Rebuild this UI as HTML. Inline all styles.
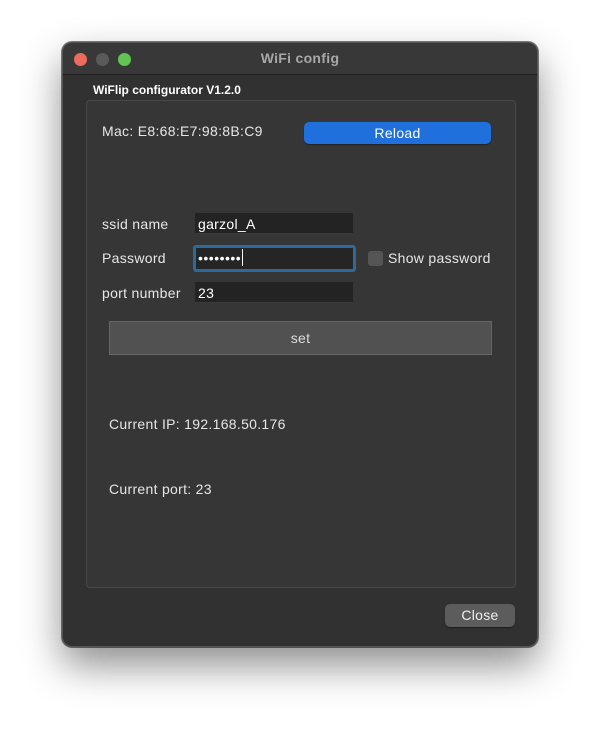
<!DOCTYPE html>
<html><head><style>
body{margin:0;width:600px;height:730px;background:#fff;position:relative;overflow:hidden;font-family:"Liberation Sans",sans-serif;font-size:14px;letter-spacing:0.3px;color:#e6e6e6}
.win{position:absolute;left:62px;top:42px;width:476px;height:605px;background:#313131;border-radius:10px;border:1px solid #555;box-sizing:border-box;box-shadow:0 18px 40px rgba(0,0,0,.45),0 0 0 1px rgba(0,0,0,.5)}
.tb{position:absolute;left:0;top:0;width:100%;height:31px;background:#383838;border-bottom:1px solid #1e1e1e;border-radius:10px 10px 0 0}
.dot{position:absolute;top:10px;width:13px;height:13px;border-radius:50%}
.a{position:absolute;white-space:nowrap}
.grp{position:absolute;left:23px;top:57px;width:430px;height:488px;background:#363636;border:1px solid #484848;border-radius:4px;box-sizing:border-box}
.inp{position:absolute;background:#232323;border-bottom:1px solid #3a3a3a;height:20px}
</style></head><body>
<div class="win">
<div class="tb">
<div class="dot" style="left:11px;background:#ed6a5e"></div>
<div class="dot" style="left:33px;background:#5a5a5a"></div>
<div class="dot" style="left:55px;background:#61c554"></div>
<div class="a" style="left:0;width:100%;text-align:center;top:7px;font-weight:bold;color:#a8a8a8;font-size:14px">WiFi config</div>
</div>
<div class="a" style="left:30px;top:40px;font-size:12px;color:#fff;font-weight:bold;letter-spacing:0">WiFlip configurator V1.2.0</div>
<div class="grp"></div>
<div class="a" style="left:39px;top:80px">Mac: E8:68:E7:98:8B:C9</div>
<div class="a" style="left:241px;top:79px;width:187px;height:22px;background:#1f6fdd;border-radius:5px;text-align:center;line-height:22px;color:#fff;box-shadow:0 1px 1px rgba(0,0,0,.4)">Reload</div>
<div class="a" style="left:39px;top:173px">ssid name</div>
<div class="inp" style="left:132px;top:170px;width:158px"></div>
<div class="a" style="left:135px;top:173px;color:#fff">garzol_A</div>
<div class="a" style="left:39px;top:207px">Password</div>
<div class="a" style="left:130px;top:202px;width:163px;height:27px;box-sizing:border-box;border:3px solid #2a6a9c;border-radius:3px;background:#252525"></div>
<div class="a" style="left:135px;top:206px;color:#fff;letter-spacing:0.5px">••••••••<span style="display:inline-block;width:1px;height:17px;background:#fff;vertical-align:-3px;margin-left:1px"></span></div>
<div class="a" style="left:305px;top:208px;width:15px;height:15px;background:#555;border-radius:3px"></div>
<div class="a" style="left:325px;top:207px">Show password</div>
<div class="a" style="left:39px;top:242px">port number</div>
<div class="inp" style="left:132px;top:239px;width:158px"></div>
<div class="a" style="left:135px;top:242px;color:#fff">23</div>
<div class="a" style="left:46px;top:278px;width:383px;height:34px;box-sizing:border-box;background:#515151;border:1px solid #666;text-align:center;line-height:32px;color:#ddd">set</div>
<div class="a" style="left:46px;top:373px">Current IP: 192.168.50.176</div>
<div class="a" style="left:46px;top:438px">Current port: 23</div>
<div class="a" style="left:382px;top:561px;width:70px;height:23px;background:#5c5c5c;border-radius:5px;text-align:center;line-height:23px;color:#eee;box-shadow:0 1px 1px rgba(0,0,0,.4)">Close</div>
</div>
</body></html>
